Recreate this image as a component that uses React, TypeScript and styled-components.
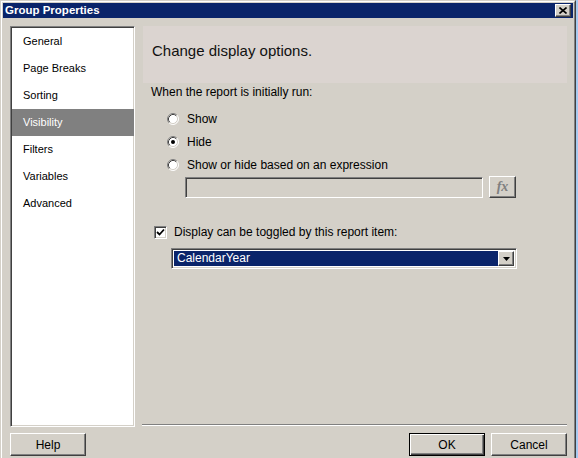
import React from 'react';
import styled, { createGlobalStyle } from 'styled-components';

const Global = createGlobalStyle`
  html, body { margin: 0; padding: 0; background: #a6caf0; }
  body { font-family: 'Liberation Sans', Arial, sans-serif; color: #000; }
  * { box-sizing: border-box; }
`;

const sunken = `
  border-top: 1px solid #808080;
  border-left: 1px solid #808080;
  border-right: 1px solid #ffffff;
  border-bottom: 1px solid #ffffff;
  box-shadow: inset 1px 1px 0 #404040, inset -1px -1px 0 #d4d0c8;
`;

const raised = `
  border-top: 1px solid #ffffff;
  border-left: 1px solid #ffffff;
  border-right: 1px solid #404040;
  border-bottom: 1px solid #404040;
  box-shadow: inset -1px -1px 0 #808080;
`;

const Window = styled.div`
  width: 576px;
  height: 458px;
  overflow: hidden;
  background: #d4d0c8;
  border-top: 1px solid #d4d0c8;
  border-left: 1px solid #d4d0c8;
  border-right: 1px solid #404040;
  display: flex;
  flex-direction: column;
`;

const Frame = styled.div`
  flex: 1;
  display: flex;
  flex-direction: column;
  border-top: 1px solid #ffffff;
  border-left: 1px solid #ffffff;
  border-right: 1px solid #808080;
  padding: 1px 1px 0 1px;
`;

const TitleBar = styled.div`
  height: 15px;
  background: #0a246a;
  display: flex;
  align-items: center;
  justify-content: space-between;
  padding: 0 2px 0 2px;
`;

const Title = styled.span`
  color: #ffffff;
  font-weight: bold;
  font-size: 11.5px;
  line-height: 15px;
`;

const CloseButton = styled.div`
  width: 16px;
  height: 13px;
  background: #d4d0c8;
  ${raised}
  display: flex;
  align-items: center;
  justify-content: center;
`;

const Body = styled.div`
  display: flex;
  gap: 8px;
  height: 401px;
  margin-top: 8px;
  padding: 0 6px 0 7px;
`;

const Nav = styled.div`
  width: 125px;
  flex-shrink: 0;
  background: #ffffff;
  ${sunken}
  padding: 1px 0 1px 1px;
`;

const NavItem = styled.div<{ $active?: boolean }>`
  height: 27px;
  line-height: 27px;
  padding-left: 11px;
  font-size: 11px;
  background: ${(p) => (p.$active ? '#808080' : 'transparent')};
  color: ${(p) => (p.$active ? '#ffffff' : '#000000')};
`;

const Content = styled.div`
  flex: 1;
  display: flex;
  flex-direction: column;
`;

const Header = styled.div`
  height: 57px;
  background: #dbd4d0;
  padding: 16px 0 0 9px;
  font-size: 15px;
  line-height: 18px;
  color: #111;
`;

const Label = styled.div`
  margin: 2px 0 0 8px;
  font-size: 12px;
  line-height: 14px;
`;

const RadioGroup = styled.div`
  margin-top: 8px;
  display: flex;
  flex-direction: column;
`;

const RadioRow = styled.div`
  height: 23px;
  display: flex;
  align-items: center;
  gap: 8px;
  padding-left: 24px;
  font-size: 12px;
`;

const ExpressionRow = styled.div`
  display: flex;
  align-items: center;
  gap: 6px;
  padding-left: 42px;
`;

const TextBox = styled.div`
  width: 298px;
  height: 21px;
  background: #d4d0c8;
  ${sunken}
`;

const FxButton = styled.div`
  width: 27px;
  height: 22px;
  background: #d4d0c8;
  ${raised}
  display: flex;
  align-items: center;
  justify-content: center;
  font-family: 'Liberation Serif', 'Times New Roman', serif;
  font-style: italic;
  font-weight: bold;
  font-size: 14px;
  color: #808080;
`;

const CheckRow = styled.div`
  margin-top: 27px;
  display: flex;
  align-items: center;
  gap: 7px;
  padding-left: 11px;
  font-size: 12px;
  height: 14px;
`;

const CheckBox = styled.div`
  width: 13px;
  height: 13px;
  background: #ffffff;
  ${sunken}
  display: flex;
  align-items: center;
  justify-content: center;
`;

const Select = styled.div`
  margin: 9px 0 0 28px;
  width: 346px;
  height: 21px;
  background: #ffffff;
  ${sunken}
  padding: 2px;
  display: flex;
`;

const SelectValue = styled.div`
  flex: 1;
  background: #0a246a;
  color: #ffffff;
  font-size: 12px;
  line-height: 15px;
  padding-left: 3px;
`;

const SelectArrow = styled.div`
  width: 16px;
  background: #d4d0c8;
  ${raised}
  display: flex;
  align-items: center;
  justify-content: center;
`;

const Separator = styled.div`
  margin-top: auto;
  margin-bottom: 1px;
  margin-left: -1px;
  height: 2px;
  border-top: 1px solid #808080;
  border-bottom: 1px solid #ffffff;
`;

const Footer = styled.div`
  display: flex;
  gap: 6px;
  margin-top: 6px;
  padding: 0 6px 0 7px;
`;

const Spacer = styled.div`
  flex: 1;
`;

const Button = styled.div<{ $default?: boolean }>`
  width: 76px;
  height: 23px;
  background: #d4d0c8;
  font-size: 12px;
  display: flex;
  align-items: center;
  justify-content: center;
  ${(p) =>
    p.$default
      ? `border: 1px solid #000000;
         box-shadow: inset 1px 1px 0 #ffffff, inset -1px -1px 0 #404040, inset -2px -2px 0 #808080;`
      : raised}
`;

const Radio: React.FC<{ checked?: boolean }> = ({ checked }) => (
  <svg width="12" height="12" viewBox="0 0 12 12">
    <circle cx="6" cy="6" r="5" fill="#ffffff" />
    <path d="M2.11 9.89 A5.5 5.5 0 0 1 9.89 2.11" fill="none" stroke="#808080" strokeWidth="1" />
    <path d="M9.89 2.11 A5.5 5.5 0 0 1 2.11 9.89" fill="none" stroke="#ffffff" strokeWidth="1" />
    <path d="M2.82 9.18 A4.5 4.5 0 0 1 9.18 2.82" fill="none" stroke="#404040" strokeWidth="1" />
    <path d="M9.18 2.82 A4.5 4.5 0 0 1 2.82 9.18" fill="none" stroke="#d4d0c8" strokeWidth="1" />
    {checked && <circle cx="6" cy="6" r="2" fill="#000000" />}
  </svg>
);

const navItems = ['General', 'Page Breaks', 'Sorting', 'Visibility', 'Filters', 'Variables', 'Advanced'];

export default function App() {
  return (
    <>
      <Global />
      <Window>
        <Frame>
          <TitleBar>
            <Title>Group Properties</Title>
            <CloseButton>
              <svg width="8" height="7" viewBox="0 0 8 7">
                <path d="M0.5 0.5 L7.5 6.5 M7.5 0.5 L0.5 6.5" stroke="#000" strokeWidth="1.6" />
              </svg>
            </CloseButton>
          </TitleBar>
          <Body>
            <Nav>
              {navItems.map((n) => (
                <NavItem key={n} $active={n === 'Visibility'}>
                  {n}
                </NavItem>
              ))}
            </Nav>
            <Content>
              <Header>Change display options.</Header>
              <Label>When the report is initially run:</Label>
              <RadioGroup>
                <RadioRow>
                  <Radio />
                  Show
                </RadioRow>
                <RadioRow>
                  <Radio checked />
                  Hide
                </RadioRow>
                <RadioRow>
                  <Radio />
                  Show or hide based on an expression
                </RadioRow>
              </RadioGroup>
              <ExpressionRow>
                <TextBox />
                <FxButton>fx</FxButton>
              </ExpressionRow>
              <CheckRow>
                <CheckBox>
                  <svg width="9" height="9" viewBox="0 0 9 9">
                    <polyline points="1,4 3.5,6.5 8,1.5" fill="none" stroke="#000" strokeWidth="1.8" />
                  </svg>
                </CheckBox>
                Display can be toggled by this report item:
              </CheckRow>
              <Select>
                <SelectValue>CalendarYear</SelectValue>
                <SelectArrow>
                  <svg width="7" height="4" viewBox="0 0 7 4">
                    <polygon points="0,0 7,0 3.5,4" fill="#000" />
                  </svg>
                </SelectArrow>
              </Select>
              <Separator />
            </Content>
          </Body>
          <Footer>
            <Button>Help</Button>
            <Spacer />
            <Button $default>OK</Button>
            <Button>Cancel</Button>
          </Footer>
        </Frame>
      </Window>
    </>
  );
}
